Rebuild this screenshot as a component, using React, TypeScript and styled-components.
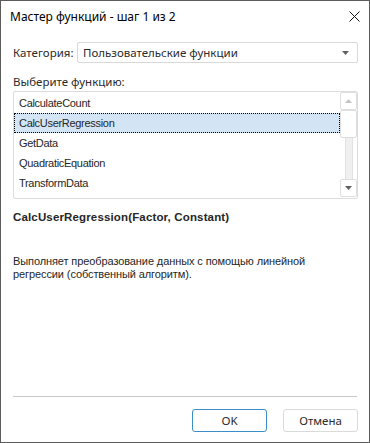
import React from "react"
import styled, { createGlobalStyle } from "styled-components"

const GlobalStyle = createGlobalStyle`
  html, body {
    margin: 0;
    padding: 0;
    background: #ffffff;
  }
  * {
    box-sizing: border-box;
  }
`

const uiFont = `"Noto Sans", "Open Sans", sans-serif`
const listFont = `"Liberation Sans", Arial, sans-serif`

const Window = styled.div`
  width: 370px;
  height: 443px;
  border: 1px solid #5c5c5c;
  background: #ffffff;
  display: flex;
  flex-direction: column;
  color: #1f1f1f;
`

const TitleBar = styled.div`
  height: 31px;
  display: flex;
  align-items: center;
  padding-left: 9px;
  padding-right: 9px;
`

const Title = styled.span`
  flex: 1;
  font-family: ${uiFont};
  font-size: 12px;
  color: #000000;
`

const CloseButton = styled.button`
  width: 12px;
  height: 12px;
  padding: 0;
  border: none;
  background: transparent;
  display: flex;
  align-items: center;
  justify-content: center;
`

const Body = styled.div`
  flex: 1;
  display: flex;
  flex-direction: column;
  padding: 10px 11px 0 11px;
`

const CategoryRow = styled.div`
  display: flex;
  align-items: center;
`

const FieldLabel = styled.span`
  width: 65px;
  padding-left: 1px;
  font-family: ${uiFont};
  font-size: 11.5px;
  color: #2b2b2b;
`

const Combo = styled.div`
  flex: 1;
  height: 21px;
  border: 1px solid #d9d9d9;
  border-radius: 2px;
  display: flex;
  align-items: center;
  padding-left: 5px;
  padding-right: 8px;
  font-family: ${uiFont};
  font-size: 11.5px;
  color: #2b2b2b;
`

const ComboText = styled.span`
  flex: 1;
`

const SectionLabel = styled.div`
  margin-top: 11px;
  padding-left: 1px;
  font-family: ${uiFont};
  font-size: 11.5px;
  color: #2b2b2b;
`

const ListBox = styled.div`
  margin-top: 2px;
  margin-left: 1px;
  height: 108px;
  border: 1px solid #dcdcdc;
  border-radius: 2px;
  display: flex;
  overflow: hidden;
`

const Items = styled.div`
  flex: 1;
  display: flex;
  flex-direction: column;
  padding-top: 1px;
`

const Item = styled.div<{ $selected?: boolean }>`
  height: 20px;
  flex-shrink: 0;
  display: flex;
  align-items: center;
  padding-left: 4px;
  font-family: ${listFont};
  font-size: 11px;
  color: #262626;
  letter-spacing: -0.3px;
  background: ${p => (p.$selected ? "#d3e5f5" : "transparent")};
  border: 1px dotted ${p => (p.$selected ? "#000000" : "transparent")};
`

const ScrollBar = styled.div`
  width: 17px;
  display: flex;
  flex-direction: column;
  align-items: center;
  padding-bottom: 1px;
`

const ScrollButton = styled.div`
  width: 17px;
  height: 18px;
  border: 1px solid #dedede;
  border-radius: 2px;
  background: #ffffff;
  display: flex;
  align-items: center;
  justify-content: center;
`

const Track = styled.div`
  flex: 1;
  width: 8px;
  background: #f0f0f0;
  border-left: 1px solid #e2e2e2;
  border-right: 1px solid #e2e2e2;
  display: flex;
  flex-direction: column;
  align-items: center;
`

const Thumb = styled.div`
  width: 17px;
  height: 28px;
  border: 1px solid #dedede;
  border-radius: 2px;
  background: #ffffff;
`

const Signature = styled.div`
  margin-top: 12px;
  padding-left: 1px;
  font-family: ${listFont};
  font-size: 11.5px;
  font-weight: bold;
  color: #262626;
  letter-spacing: 0.15px;
`

const Description = styled.div`
  margin-top: 32px;
  padding-left: 1px;
  font-family: ${listFont};
  font-size: 11px;
  line-height: 13px;
  color: #262626;
  letter-spacing: -0.1px;
  max-width: 310px;
`

const Footer = styled.div`
  margin-top: auto;
  padding: 0 11px 10px 12px;
`

const Separator = styled.div`
  height: 1px;
  background: #c9c9c9;
  margin-right: 1px;
`

const Buttons = styled.div`
  display: flex;
  justify-content: flex-end;
  gap: 16px;
  margin-top: 12px;
`

const DialogButton = styled.button<{ $default?: boolean }>`
  width: 75px;
  height: 23px;
  background: #ffffff;
  border: 1px solid ${p => (p.$default ? "#3b8ec9" : "#dadada")};
  border-radius: 3px;
  font-family: ${uiFont};
  font-size: 11.5px;
  color: #2b2b2b;
  padding: 0;
`

function Arrow({ dir, color }: { dir: "up" | "down"; color: string }) {
  return (
    <svg width="7" height="4" viewBox="0 0 7 4">
      {dir === "up" ? (
        <path d="M0 4 L3.5 0 L7 4 Z" fill={color} />
      ) : (
        <path d="M0 0 L7 0 L3.5 4 Z" fill={color} />
      )}
    </svg>
  )
}

const functions = [
  "CalculateCount",
  "CalcUserRegression",
  "GetData",
  "QuadraticEquation",
  "TransformData",
]

export default function App() {
  return (
    <>
      <GlobalStyle />
      <Window>
        <TitleBar>
          <Title>Мастер функций - шаг 1 из 2</Title>
          <CloseButton>
            <svg width="11" height="11" viewBox="0 0 11 11">
              <path d="M0.5 0.5 L10.5 10.5 M10.5 0.5 L0.5 10.5" stroke="#111" strokeWidth="1" />
            </svg>
          </CloseButton>
        </TitleBar>
        <Body>
          <CategoryRow>
            <FieldLabel>Категория:</FieldLabel>
            <Combo>
              <ComboText>Пользовательские функции</ComboText>
              <Arrow dir="down" color="#606060" />
            </Combo>
          </CategoryRow>
          <SectionLabel>Выберите функцию:</SectionLabel>
          <ListBox>
            <Items>
              {functions.map(f => (
                <Item key={f} $selected={f === "CalcUserRegression"}>
                  {f}
                </Item>
              ))}
            </Items>
            <ScrollBar>
              <ScrollButton>
                <Arrow dir="up" color="#c4c4c4" />
              </ScrollButton>
              <Track>
                <Thumb />
              </Track>
              <ScrollButton>
                <Arrow dir="down" color="#606060" />
              </ScrollButton>
            </ScrollBar>
          </ListBox>
          <Signature>CalcUserRegression(Factor, Constant)</Signature>
          <Description>
            Выполняет преобразование данных с помощью линейной регрессии (собственный алгоритм).
          </Description>
        </Body>
        <Footer>
          <Separator />
          <Buttons>
            <DialogButton $default>OK</DialogButton>
            <DialogButton>Отмена</DialogButton>
          </Buttons>
        </Footer>
      </Window>
    </>
  )
}
